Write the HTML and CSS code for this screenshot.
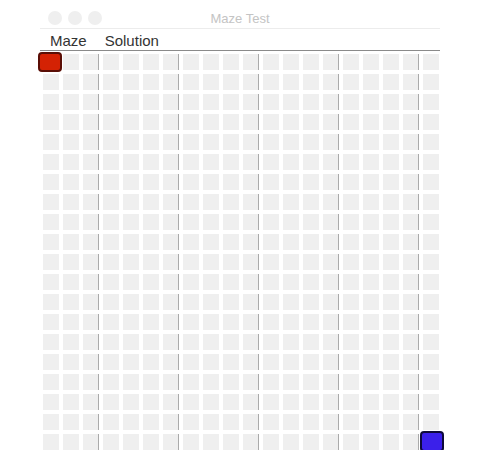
FILE: index.html
```html
<!DOCTYPE html>
<html lang="en">
<head>
  <meta charset="UTF-8" />
  <meta name="viewport" content="width=device-width, initial-scale=1.0"/>
  <title>Maze Test</title>
  <link rel="stylesheet" href="styles.css">
</head>
<body>
  <div class="window">
    <div class="titlebar">
      <div class="lights">
        <span class="light"></span>
        <span class="light"></span>
        <span class="light"></span>
      </div>
      <span class="title">Maze Test</span>
    </div>
    <div class="menubar">
      <span class="menu">Maze</span>
      <span class="menu">Solution</span>
    </div>
    <div class="board">
      <div class="grid" id="grid"></div>
      <div class="marker start"></div>
      <div class="marker goal"></div>
    </div>
  </div>

  <script>
    const grid = document.getElementById("grid");
    const size = 20;

    for (let row = 0; row < size; row++) {
      for (let col = 0; col < size; col++) {
        const cell = document.createElement("div");
        cell.className = "cell";
        if (col % 4 === 2) {
          cell.classList.add("wall");
        }
        grid.appendChild(cell);
      }
    }
  </script>
</body>
</html>
```

FILE: styles.css
```css
body {
  margin: 0;
  background-color: white;
  font-family: 'Liberation Sans', Arial, sans-serif;
}

.window {
  width: 400px;
  margin: 8px 0 0 40px;
}

.titlebar {
  position: relative;
  height: 20px;
  border-bottom: 1px solid #ececec;
  display: flex;
  align-items: center;
  justify-content: center;
}

.lights {
  position: absolute;
  left: 8px;
  top: 3px;
  display: flex;
  gap: 6px;
}

.light {
  width: 14px;
  height: 14px;
  border-radius: 50%;
  background-color: #efefef;
}

.title {
  font-size: 13px;
  color: #c4c4c4;
}

.menubar {
  height: 21px;
  border-bottom: 1px solid #8a8a8a;
  display: flex;
  align-items: flex-end;
  gap: 18px;
  padding-left: 10px;
}

.menu {
  font-size: 15px;
  color: #333;
  line-height: 19px;
}

.board {
  position: relative;
  padding: 3px 0 0 3px;
}

.grid {
  display: grid;
  grid-template-columns: repeat(20, 16px);
  grid-auto-rows: 16px;
  gap: 4px;
}

.cell {
  background-color: #efefef;
}

.cell.wall {
  box-shadow: inset -1px 0 #aaaaaa;
}

.marker {
  position: absolute;
  width: 20px;
  height: 16px;
  border: 2px solid;
  border-radius: 4px;
}

.start {
  left: -2px;
  top: 1px;
  background-color: #d42204;
  border-color: #5a0e06;
}

.goal {
  left: 380px;
  top: 380px;
  height: 17px;
  background-color: #3b20ea;
  border-color: #0e0a3a;
}
```
